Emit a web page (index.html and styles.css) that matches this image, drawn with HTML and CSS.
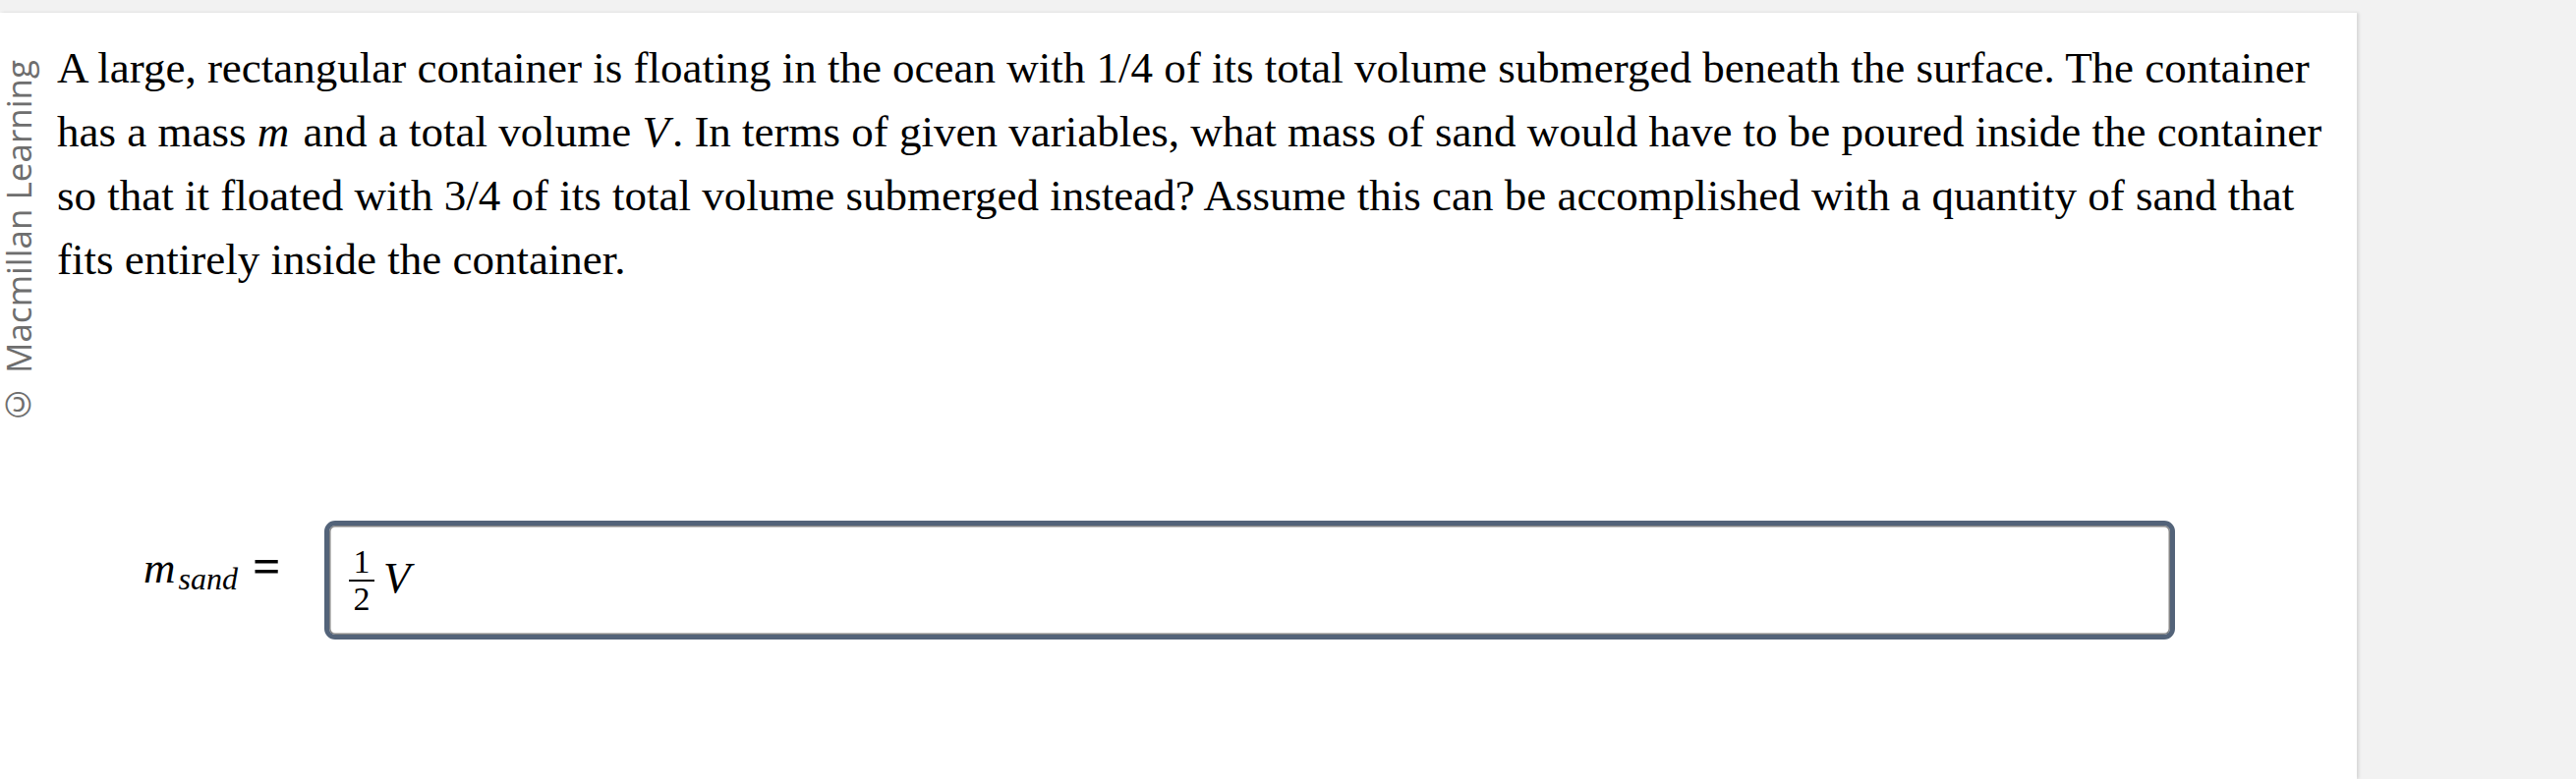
FILE: index.html
```html
<!DOCTYPE html>
<html lang="en">
<head>
<meta charset="utf-8">
<title>Question</title>
<link rel="stylesheet" href="styles.css">
</head>
<body>
<div class="panel">
  <div class="brand">© Macmillan Learning</div>
  <div class="content">
    <p class="question">A large, rectangular container is floating in the ocean with 1/4 of its total volume submerged beneath the surface. The container has a mass <i class="mv">m</i> and a total volume <i class="mv">V</i>. In terms of given variables, what mass of sand would have to be poured inside the container so that it floated with 3/4 of its total volume submerged instead? Assume this can be accomplished with a quantity of sand that fits entirely inside the container.</p>
    <div class="formula">
      <div class="label"><i class="m">m</i><i class="sub">sand</i><span class="eq">=</span></div>
      <div class="answer">
        <span class="frac"><span class="num">1</span><span class="bar"></span><span class="den">2</span></span>
        <i class="var">V</i>
      </div>
    </div>
  </div>
</div>
</body>
</html>
```
FILE: styles.css
```css
html, body {
  margin: 0;
  padding: 0;
  height: 100%;
  overflow: hidden;
}
body {
  background: #f2f2f2;
  font-family: "Liberation Serif", "Times New Roman", serif;
  color: #000;
}
.panel {
  display: flex;
  align-items: flex-start;
  margin-top: 13px;
  width: 2398px;
  height: 780px;
  background: #fff;
  box-shadow: 2px 0 3px rgba(0, 0, 0, 0.12);
}
.brand {
  writing-mode: vertical-rl;
  transform: rotate(180deg);
  font-family: "Open Sans", "DejaVu Sans", sans-serif;
  font-size: 35px;
  line-height: 36px;
  color: #6e6e6e;
  margin-top: 48px;
  margin-left: 1px;
  white-space: nowrap;
}
.content {
  padding-left: 21px;
  width: 2322px;
}
.question {
  margin: 24px 0 0 0;
  font-size: 45px;
  line-height: 65px;
}
i {
  font-family: "Liberation Serif", "Times New Roman", serif;
  font-style: italic;
}
.mv {
  padding-right: 3px;
}
.formula {
  display: flex;
  align-items: flex-start;
  margin-top: 233px;
}
.label {
  display: flex;
  align-items: baseline;
  margin-left: 88px;
  padding-top: 25px;
  font-size: 45px;
  line-height: 43px;
  width: 184px;
}
.label .sub {
  font-size: 32px;
  position: relative;
  top: 7px;
  margin-left: 3px;
}
.label .eq {
  margin-left: 15px;
  font-size: 50px;
  font-weight: bold;
}
.answer {
  box-sizing: border-box;
  width: 1883px;
  height: 121px;
  border: 5px solid #536379;
  border-radius: 11px;
  box-shadow: inset 0 0 0 1.5px #858585;
  display: flex;
  align-items: center;
  padding-left: 20px;
}
.frac {
  display: inline-flex;
  flex-direction: column;
  align-items: center;
  font-size: 34px;
  line-height: 26px;
}
.frac .bar {
  width: 26px;
  height: 2px;
  background: #000;
  margin: 5px 0 5px 0;
}
.answer .var {
  font-size: 45px;
  line-height: 43px;
  margin-left: 9px;
  padding-bottom: 5px;
}
```
